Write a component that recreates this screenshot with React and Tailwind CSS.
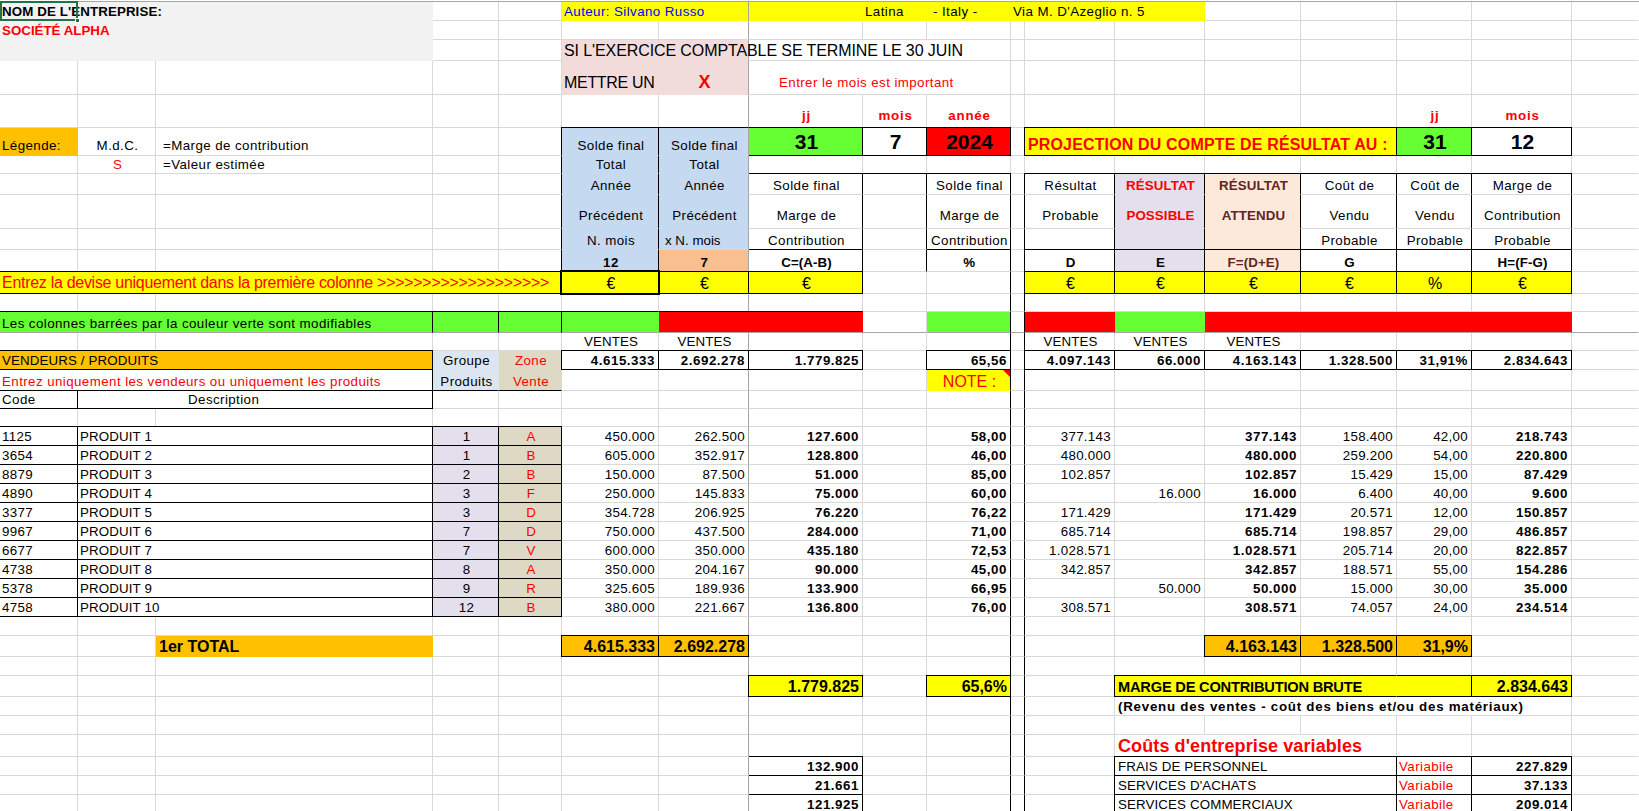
import React from "react";

const YEL = "bg-[#ffff00]", ORG = "bg-[#ffc000]", GRN = "bg-[#66ff33]", RED = "bg-[#ff0000]", BLU = "bg-[#c5d9f1]";
const LAV = "bg-[#e4dfec]", BEI = "bg-[#ddd9c4]", PCH = "bg-[#fde9d9]", GRY = "bg-[#f2f2f2]", PNK = "bg-[#f2dcdb]", LBL = "bg-[#dce6f1]";
const CT = "justify-center", RT = "justify-end pr-[3px]", BD = "font-bold", TR = "text-[#ff0000]", BRN = "text-[#632523]", T16 = "text-[16px]";
const BIG = "items-center text-[21px] font-bold " + CT;
const LBLTOP = BD + " " + TR + " " + CT + " pb-[3px]";

const SPAN = { 1: "", 2: "col-span-2", 3: "col-span-3", 4: "col-span-4", 5: "col-span-5" };

function hdr(col, t, k = "", b = "lr", f = 0) {
  return { c: col, t, k: k + " " + CT, b, f };
}

const products = [
  ["1125", 1, "1", "A", "450.000", "262.500", "127.600", "58,00", "377.143", "", "377.143", "158.400", "42,00", "218.743"],
  ["3654", 2, "1", "B", "605.000", "352.917", "128.800", "46,00", "480.000", "", "480.000", "259.200", "54,00", "220.800"],
  ["8879", 3, "2", "B", "150.000", "87.500", "51.000", "85,00", "102.857", "", "102.857", "15.429", "15,00", "87.429"],
  ["4890", 4, "3", "F", "250.000", "145.833", "75.000", "60,00", "", "16.000", "16.000", "6.400", "40,00", "9.600"],
  ["3377", 5, "3", "D", "354.728", "206.925", "76.220", "76,22", "171.429", "", "171.429", "20.571", "12,00", "150.857"],
  ["9967", 6, "7", "D", "750.000", "437.500", "284.000", "71,00", "685.714", "", "685.714", "198.857", "29,00", "486.857"],
  ["6677", 7, "7", "V", "600.000", "350.000", "435.180", "72,53", "1.028.571", "", "1.028.571", "205.714", "20,00", "822.857"],
  ["4738", 8, "8", "A", "350.000", "204.167", "90.000", "45,00", "342.857", "", "342.857", "188.571", "55,00", "154.286"],
  ["5378", 9, "9", "R", "325.605", "189.936", "133.900", "66,95", "", "50.000", "50.000", "15.000", "30,00", "35.000"],
  ["4758", 10, "12", "B", "380.000", "221.667", "136.800", "76,00", "308.571", "", "308.571", "74.057", "24,00", "234.514"],
];

const productRows = products.map((p, i) => ({
  h: "h-[19px]",
  cells: [
    { c: 0, t: p[0], b: i === 0 ? "trb" : "rb" },
    { c: 1, s: 2, t: "PRODUIT " + p[1], b: i === 0 ? "trb" : "rb" },
    { c: 3, t: p[2], k: LAV + " " + CT, b: i === 0 ? "trb" : "rb", f: 1 },
    { c: 4, t: p[3], k: BEI + " " + CT + " " + TR, b: i === 0 ? "trb" : "rb", f: 1 },
    { c: 5, t: p[4], k: RT },
    { c: 6, t: p[5], k: RT },
    { c: 7, t: p[6], k: RT + " " + BD },
    { c: 9, t: p[7], k: RT + " " + BD },
    { c: 11, t: p[8], k: RT },
    { c: 12, t: p[9], k: RT },
    { c: 13, t: p[10], k: RT + " " + BD },
    { c: 14, t: p[11], k: RT },
    { c: 15, t: p[12], k: RT },
    { c: 16, t: p[13], k: RT + " " + BD },
  ],
}));

const rows = [
  { h: "h-[19px]", cells: [
    { c: 0, t: "NOM DE L'ENTREPRISE:", k: GRY + " " + BD, f: 1, sel: 1 },
    { c: 1, s: 2, k: GRY, f: 1 },
    { c: 5, s: 2, t: "Auteur: Silvano Russo", k: YEL + " text-[#0000ff]", f: 1 },
    { c: 7, k: YEL, f: 1 },
    { c: 8, t: "Latina", k: YEL, f: 1 },
    { c: 9, t: "- Italy -", k: YEL + " pl-[6px]", f: 1 },
    { c: 10, s: 3, t: "Via M. D'Azeglio n. 5", k: YEL, f: 1 },
  ] },
  { h: "h-[19px]", cells: [{ c: 0, s: 3, t: "SOCIÉTÉ ALPHA", k: GRY + " " + BD + " " + TR + " tracking-[0px]", f: 1 }] },
  { h: "h-[21px]", cells: [
    { c: 0, s: 3, k: GRY, f: 1 },
    { c: 5, s: 2, t: "SI L'EXERCICE COMPTABLE SE TERMINE LE 30 JUIN", k: PNK + " " + T16 + " tracking-[-0.1px] pb-px", f: 1 },
    { c: 7, s: 3 },
  ] },
  { h: "h-[34px]", cells: [
    { c: 5, t: "METTRE UN", k: PNK + " " + T16 + " tracking-[-0.3px] pb-[3px]", f: 1 },
    { c: 6, t: "X", k: PNK + " text-[18px] font-bold " + TR + " " + CT + " pb-[4px]", f: 1 },
    { c: 7, s: 3, t: "Entrer le mois est important", k: TR + " pl-[30px] pb-[3px]" },
  ] },
  { h: "h-[33px]", cells: [
    { c: 7, t: "jj", k: LBLTOP },
    { c: 8, t: "mois", k: LBLTOP },
    { c: 9, t: "année", k: LBLTOP },
    { c: 15, t: "jj", k: LBLTOP },
    { c: 16, t: "mois", k: LBLTOP },
  ] },
  { h: "h-[28px]", cells: [
    { c: 0, t: "Légende:", k: ORG + " pb-px", f: 1 },
    { c: 1, t: "M.d.C.", k: CT + " pb-px" },
    { c: 2, t: "=Marge de contribution", k: "pl-[7px] pb-px" },
    hdr(5, "Solde final", BLU + " pb-px", "tlr", 1),
    hdr(6, "Solde final", BLU + " pb-px", "t", 1),
    { c: 7, t: "31", k: GRN + " " + BIG, b: "tb", f: 1 },
    { c: 8, t: "7", k: BIG, b: "tlrb" },
    { c: 9, t: "2024", k: RED + " " + BIG, b: "trb", f: 1 },
    { c: 11, s: 4, t: "PROJECTION DU COMPTE DE RÉSULTAT AU :", k: YEL + " " + BD + " " + TR + " " + T16 + " tracking-[0.15px] pl-[3px] pb-[2px]", b: "tlrb", f: 1 },
    { c: 15, t: "31", k: GRN + " " + BIG, b: "trb", f: 1 },
    { c: 16, t: "12", k: BIG, b: "trb" },
  ] },
  { h: "h-[18px]", cells: [
    { c: 1, t: "S", k: CT + " " + TR },
    { c: 2, t: "=Valeur estimée", k: "pl-[7px]" },
    hdr(5, "Total", BLU, "lr", 1),
    hdr(6, "Total", BLU, "", 1),
  ] },
  { h: "h-[21px]", cells: [
    hdr(5, "Année", BLU, "lr", 1),
    hdr(6, "Année", BLU, "", 1),
    hdr(7, "Solde final", "", "tr"),
    { c: 8, b: "tr" },
    hdr(9, "Solde final", "", "tr"),
    hdr(11, "Résultat", "", "tlr"),
    hdr(12, "RÉSULTAT", LAV + " " + BD + " " + TR, "tr", 1),
    hdr(13, "RÉSULTAT", PCH + " " + BD + " " + BRN, "tr", 1),
    hdr(14, "Coût de", "", "tr"),
    hdr(15, "Coût de", "", "tr"),
    hdr(16, "Marge de", "", "tr"),
  ] },
  { h: "h-[34px]", cells: [
    hdr(5, "Précédent", BLU + " pb-[4px]", "lr", 1),
    hdr(6, "Précédent", BLU + " pb-[4px]", "", 1),
    hdr(7, "Marge de", "pb-[4px]", "r"),
    { c: 8, b: "r" },
    hdr(9, "Marge de", "pb-[4px]", "r"),
    hdr(11, "Probable", "pb-[4px]", "lr"),
    hdr(12, "POSSIBLE", LAV + " " + BD + " " + TR + " pb-[4px]", "r", 1),
    hdr(13, "ATTENDU", PCH + " " + BD + " " + BRN + " pb-[4px]", "r", 1),
    hdr(14, "Vendu", "pb-[4px]", "r"),
    hdr(15, "Vendu", "pb-[4px]", "r"),
    hdr(16, "Contribution", "pb-[4px]", "r"),
  ] },
  { h: "h-[21px]", cells: [
    hdr(5, "N. mois", BLU, "lr", 1),
    { c: 6, t: "x N. mois", k: BLU + " tracking-[0px] pl-[6px]", f: 1 },
    hdr(7, "Contribution", "", "r"),
    { c: 8, b: "r" },
    hdr(9, "Contribution", "", "r"),
    hdr(11, "", "", "lr"),
    hdr(12, "", LAV, "r", 1),
    hdr(13, "", PCH, "r", 1),
    hdr(14, "Probable", "", "r"),
    hdr(15, "Probable", "", "r"),
    hdr(16, "Probable", "", "r"),
  ] },
  { h: "h-[22px]", cells: [
    hdr(5, "12", BLU + " " + BD, "lr", 1),
    hdr(6, "7", "bg-[#fabf8f] " + BD, "", 1),
    hdr(7, "C=(A-B)", BD, "tr"),
    { c: 8, b: "r" },
    hdr(9, "%", BD, "tr"),
    hdr(11, "D", BD, "tlr"),
    hdr(12, "E", LAV + " " + BD, "tr", 1),
    hdr(13, "F=(D+E)", PCH + " " + BD + " " + BRN, "tr", 1),
    hdr(14, "G", BD, "tr"),
    hdr(15, "", "", "tr"),
    hdr(16, "H=(F-G)", BD, "tr"),
  ] },
  { h: "h-[22px]", cells: [
    { c: 0, s: 5, t: "Entrez la devise uniquement dans la première colonne >>>>>>>>>>>>>>>>>>>", k: YEL + " " + TR + " " + T16 + " tracking-[-0.29px] pb-[2px]", b: "tb", f: 1 },
    hdr(5, "€", YEL + " " + T16 + " pb-px relative z-20 outline-2 outline-black -outline-offset-1", "tlrb", 1),
    hdr(6, "€", YEL + " " + T16 + " pb-px", "trb", 1),
    hdr(7, "€", YEL + " " + T16 + " pb-px", "trb", 1),
    hdr(11, "€", YEL + " " + T16 + " pb-px", "tlrb", 1),
    hdr(12, "€", YEL + " " + T16 + " pb-px", "trb", 1),
    hdr(13, "€", YEL + " " + T16 + " pb-px", "trb", 1),
    hdr(14, "€", YEL + " " + T16 + " pb-px", "trb", 1),
    hdr(15, "%", YEL + " " + T16 + " pb-px", "trb", 1),
    hdr(16, "€", YEL + " " + T16 + " pb-px", "trb", 1),
  ] },
  { h: "h-[18px]", cells: [] },
  { h: "h-[21px]", cells: [
    { c: 0, s: 3, t: "Les colonnes barrées par la couleur verte sont modifiables", k: GRN, b: "tr", f: 1 },
    { c: 3, k: GRN, b: "tr", f: 1 },
    { c: 4, k: GRN, b: "tr", f: 1 },
    { c: 5, k: GRN, b: "t", f: 1 },
    { c: 6, s: 2, k: RED, b: "t", f: 1 },
    { c: 9, k: GRN, f: 1 },
    { c: 11, k: RED, f: 1 },
    { c: 12, k: GRN, f: 1 },
    { c: 13, s: 4, k: RED, f: 1 },
  ] },
  { h: "h-[18px]", cells: [
    { c: 5, t: "VENTES", k: CT },
    { c: 6, t: "VENTES", k: CT },
    { c: 11, t: "VENTES", k: CT },
    { c: 12, t: "VENTES", k: CT },
    { c: 13, t: "VENTES", k: CT },
  ] },
  { h: "h-[19px]", cells: [
    { c: 0, s: 3, t: "VENDEURS / PRODUITS", k: ORG, b: "trb", f: 1 },
    { c: 3, t: "Groupe", k: LBL + " " + CT, f: 1 },
    { c: 4, t: "Zone", k: BEI + " " + CT + " " + TR, f: 1 },
    { c: 5, t: "4.615.333", k: RT + " " + BD, b: "tlrb" },
    { c: 6, t: "2.692.278", k: RT + " " + BD, b: "trb" },
    { c: 7, t: "1.779.825", k: RT + " " + BD, b: "trb" },
    { c: 9, t: "65,56", k: RT + " " + BD, b: "tlrb" },
    { c: 11, t: "4.097.143", k: RT + " " + BD, b: "tlrb" },
    { c: 12, t: "66.000", k: RT + " " + BD, b: "trb" },
    { c: 13, t: "4.163.143", k: RT + " " + BD, b: "trb" },
    { c: 14, t: "1.328.500", k: RT + " " + BD, b: "trb" },
    { c: 15, t: "31,91%", k: RT + " " + BD, b: "trb" },
    { c: 16, t: "2.834.643", k: RT + " " + BD, b: "trb" },
  ] },
  { h: "h-[21px]", cells: [
    { c: 0, s: 3, t: "Entrez uniquement les vendeurs ou uniquement les produits", k: TR, b: "rb" },
    { c: 3, t: "Produits", k: LBL + " " + CT, b: "b", f: 1 },
    { c: 4, t: "Vente", k: BEI + " " + CT + " " + TR, b: "b", f: 1 },
    { c: 9, t: "NOTE :", k: YEL + " " + TR + " " + T16 + " " + CT + " relative", f: 1, note: 1 },
  ] },
  { h: "h-[18px]", cells: [
    { c: 0, t: "Code", b: "rb" },
    { c: 1, s: 2, t: "Description", k: "pl-[110px]", b: "rb" },
  ] },
  { h: "h-[18px]", cells: [] },
  ...productRows,
  { h: "h-[19px]", cells: [] },
  { h: "h-[21px]", cells: [
    { c: 2, t: "1er TOTAL", k: ORG + " " + BD + " " + T16 + " pl-[3px] pb-px", f: 1 },
    { c: 5, t: "4.615.333", k: ORG + " " + RT + " " + BD + " " + T16 + " pb-px", b: "tlrb", f: 1 },
    { c: 6, t: "2.692.278", k: ORG + " " + RT + " " + BD + " " + T16 + " pb-px", b: "trb", f: 1 },
    { c: 13, t: "4.163.143", k: ORG + " " + RT + " " + BD + " " + T16 + " pb-px", b: "tlrb", f: 1 },
    { c: 14, t: "1.328.500", k: ORG + " " + RT + " " + BD + " " + T16 + " pb-px", b: "trb", f: 1 },
    { c: 15, t: "31,9%", k: ORG + " " + RT + " " + BD + " " + T16 + " pb-px", b: "trb", f: 1 },
  ] },
  { h: "h-[19px]", cells: [] },
  { h: "h-[21px]", cells: [
    { c: 7, t: "1.779.825", k: YEL + " " + RT + " " + BD + " " + T16 + " pb-px", b: "tlrb", f: 1 },
    { c: 9, t: "65,6%", k: YEL + " " + RT + " " + BD + " " + T16 + " pb-px", b: "tlrb", f: 1 },
    { c: 12, s: 3, t: "MARGE DE CONTRIBUTION BRUTE", k: YEL + " " + BD + " text-[14.67px] tracking-[-0.22px] pl-[3px] pb-px", b: "tlb", f: 1 },
    { c: 15, k: YEL, b: "trb", f: 1 },
    { c: 16, t: "2.834.643", k: YEL + " " + RT + " " + BD + " " + T16 + " pb-px", b: "trb", f: 1 },
  ] },
  { h: "h-[19px]", cells: [
    { c: 12, s: 5, t: "(Revenu des ventes - coût des biens et/ou des matériaux)", k: BD + " pl-[3px]" },
  ] },
  { h: "h-[19px]", cells: [] },
  { h: "h-[22px]", cells: [
    { c: 12, s: 3, t: "Coûts d'entreprise variables", k: BD + " " + TR + " text-[18px] tracking-[0.1px] pl-[3px] pb-[2px]" },
  ] },
  { h: "h-[19px]", cells: [
    { c: 7, t: "132.900", k: RT + " " + BD, b: "tr" },
    { c: 12, s: 3, t: "FRAIS DE PERSONNEL", k: "pl-[3px]", b: "tlr" },
    { c: 15, t: "Variabile", k: TR, b: "tr" },
    { c: 16, t: "227.829", k: RT + " " + BD, b: "tr" },
  ] },
  { h: "h-[19px]", cells: [
    { c: 7, t: "21.661", k: RT + " " + BD, b: "tr" },
    { c: 12, s: 3, t: "SERVICES D'ACHATS", k: "pl-[3px]", b: "tlr" },
    { c: 15, t: "Variabile", k: TR, b: "tr" },
    { c: 16, t: "37.133", k: RT + " " + BD, b: "tr" },
  ] },
  { h: "h-[19px]", cells: [
    { c: 7, t: "121.925", k: RT + " " + BD, b: "tr" },
    { c: 12, s: 3, t: "SERVICES COMMERCIAUX", k: "pl-[3px]", b: "tlr" },
    { c: 15, t: "Variabile", k: TR, b: "tr" },
    { c: 16, t: "209.014", k: RT + " " + BD, b: "tr" },
  ] },
];

// Excel's hinted Arial is wider than the browser's: the difference depends on the kind of text.
function fit(t, k) {
  if (!t || k.includes("tracking-")) return "";
  const lower = /[a-zà-ÿ]/.test(t);
  const num = /^[\d.,%]+$/.test(t);
  if (k.includes("font-bold")) return lower ? "tracking-[0.75px]" : num ? "tracking-[0.55px]" : "tracking-[0.1px]";
  return lower ? "tracking-[0.42px]" : num ? "tracking-[0.3px]" : "tracking-[0.12px]";
}

function Cell({ spec, col, rowIndex }) {
  const span = spec.s || 1;
  const end = col + span - 1;
  const b = spec.b || "";
  const k = spec.k || "";
  const spine = rowIndex >= 11 && (end === 9 || end === 10);
  let right = "border-r-[#d9d9d9]";
  if (b.includes("r") || spine) right = "border-r-black";
  else if (end === 6) right = "border-r-[#a6a6a6]";
  else if (end === 17 || spec.f) right = "border-r-transparent";
  let bottom = "border-b-[#d9d9d9]";
  if (b.includes("b")) bottom = "border-b-black";
  else if (rowIndex === 13) bottom = "border-b-[#a6a6a6]";
  else if (spec.f) bottom = "border-b-transparent";
  const top = b.includes("t") ? "border-t border-t-black -mt-px relative z-10" : "";
  const left = b.includes("l") ? "border-l border-l-black -ml-px relative z-10" : "";
  const align = k.includes("items-center") ? "" : "items-end";
  const sized = k.includes("text-[16px]") || k.includes("text-[14.67px]") || k.includes("text-[18px]") || k.includes("text-[21px]");
  const track = sized ? "" : fit(spec.t, k);
  return (
    <div className={`box-border flex ${align} min-w-0 whitespace-nowrap ${sized ? "" : "text-[13.33px]"} leading-[16px] border-r border-b pl-[2px] ${SPAN[span]} ${right} ${bottom} ${top} ${left} ${track} ${k} ${spec.sel ? "relative z-10" : ""}`}>
      {spec.t ? <span>{spec.t}</span> : null}
      {spec.sel ? (
        <>
          <span className="absolute -top-px left-0 -right-px -bottom-px border-2 border-[#217346]" />
          <span className="absolute -right-[3px] -bottom-[3px] w-[5px] h-[5px] bg-[#217346] border border-white" />
        </>
      ) : null}
      {spec.note ? <span className="absolute top-0 right-0 w-0 h-0 border-t-[7px] border-t-[#ff0000] border-l-[7px] border-l-transparent" /> : null}
    </div>
  );
}

function Row({ row, rowIndex }) {
  const out = [];
  for (let i = 0; i < 18; ) {
    const spec = row.cells.find((x) => x.c === i) || {};
    out.push(<Cell key={i} spec={spec} col={i} rowIndex={rowIndex} />);
    i += spec.s || 1;
  }
  return (
    <div className={`grid grid-cols-[78px_78px_277px_66px_63px_97px_90px_114px_64px_84px_14px_90px_90px_96px_96px_75px_100px_67px] ${row.h}`}>
      {out}
    </div>
  );
}

export default function App() {
  return (
    <div className="w-[1639px] h-[811px] overflow-hidden bg-white pt-px font-['Liberation_Sans',Arial,sans-serif] text-black">
      <div className="border-t border-[#a6a6a6]">
        {rows.map((row, i) => (
          <Row key={i} row={row} rowIndex={i} />
        ))}
      </div>
    </div>
  );
}
